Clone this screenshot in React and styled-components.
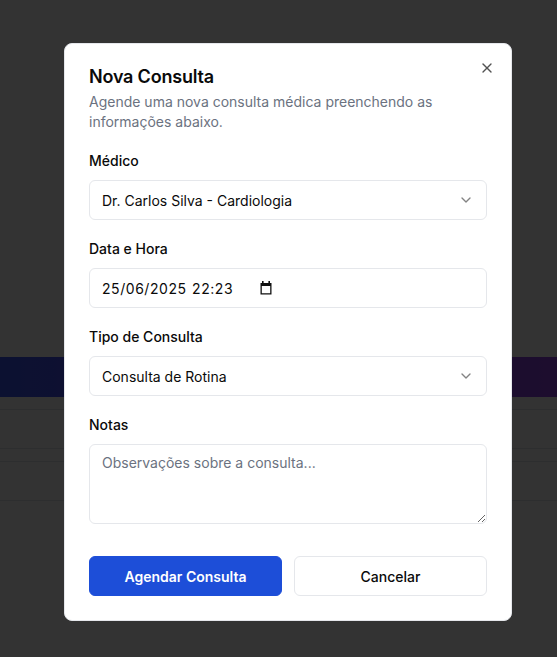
import React from 'react';
import styled, { createGlobalStyle } from 'styled-components';

const GlobalStyle = createGlobalStyle`
  * { box-sizing: border-box; }
  html, body { margin: 0; padding: 0; }
  body {
    font-family: Inter, "Noto Sans", "Liberation Sans", sans-serif;
    color: #0a0a0a;
    background: #ffffff;
  }
`;

// pagina de fundo (fica atras do overlay)
const Page = styled.div`
  min-height: 100vh;
  background: #ffffff;
`;

const Hero = styled.div`
  height: 357px;
`;

const TableHead = styled.div`
  height: 40px;
  background: linear-gradient(90deg, #3c55f5, #9141e6);
`;

const TableRows = styled.div`
  display: flex;
  flex-direction: column;
  gap: 12px;
  padding-top: 12px;
`;

const TableRow = styled.div`
  height: 40px;
  border-top: 1px solid #e2e4e8;
  border-bottom: 1px solid #e2e4e8;
`;

const Overlay = styled.div`
  position: fixed;
  inset: 0;
  background: rgba(0, 0, 0, 0.8);
`;

// modal
const Dialog = styled.div`
  position: fixed;
  top: 43px;
  left: 64px;
  width: 448px;
  padding: 24px;
  background: #ffffff;
  border: 1px solid #e5e7eb;
  border-radius: 8px;
  display: flex;
  flex-direction: column;
`;

const CloseButton = styled.button`
  position: absolute;
  top: 16px;
  right: 16px;
  width: 16px;
  height: 16px;
  padding: 0;
  border: none;
  background: none;
  color: #0a0a0a;
  opacity: 0.7;
  display: flex;
  cursor: pointer;
`;

const Title = styled.h2`
  margin: 0;
  font-size: 18px;
  line-height: 18px;
  font-weight: 600;
  letter-spacing: -0.2px;
`;

const Description = styled.p`
  margin: 6px 0 0;
  font-size: 14px;
  line-height: 20px;
  color: #6b7280;
`;

const Form = styled.form`
  display: flex;
  flex-direction: column;
  gap: 22px;
  margin-top: 22px;
`;

const Field = styled.div`
  display: flex;
  flex-direction: column;
  gap: 12px;
`;

const Label = styled.label`
  font-size: 14px;
  line-height: 14px;
  font-weight: 500;
  color: #0a0a0a;
`;

const Box = styled.div`
  height: 40px;
  padding: 0 12px;
  display: flex;
  align-items: center;
  justify-content: ${(p) => (p.$start ? 'flex-start' : 'space-between')};
  border: 1px solid #e5e7eb;
  border-radius: 6px;
  background: #ffffff;
  font-size: 14px;
  color: #0a0a0a;
`;

const DateText = styled.span`
  letter-spacing: 0.55px;
  word-spacing: 1px;
`;

const Chevron = styled.svg`
  width: 16px;
  height: 16px;
  opacity: 0.5;
`;

const CalendarIcon = styled.svg`
  width: 12px;
  height: 14px;
  margin-left: 27px;
`;

const NotesArea = styled.textarea`
  height: 80px;
  padding: 8px 12px;
  border: 1px solid #e5e7eb;
  border-radius: 6px;
  font-family: inherit;
  font-size: 14px;
  line-height: 20px;
  color: #0a0a0a;
  outline: none;
  &::placeholder {
    color: #6b7280;
  }
`;

const Footer = styled.div`
  display: grid;
  grid-template-columns: 1fr 1fr;
  gap: 12px;
  margin-top: 32px;
`;

const Button = styled.button`
  height: 40px;
  border-radius: 6px;
  font-family: inherit;
  font-size: 14px;
  font-weight: ${(p) => (p.$primary ? 600 : 500)};
  color: ${(p) => (p.$primary ? '#ffffff' : '#0a0a0a')};
  background: ${(p) => (p.$primary ? '#1d4ed8' : '#ffffff')};
  border: 1px solid ${(p) => (p.$primary ? '#1d4ed8' : '#e5e7eb')};
  cursor: pointer;
`;

const ChevronDown = () => (
  <Chevron viewBox="0 0 24 24" fill="none" stroke="currentColor" strokeWidth="2" strokeLinecap="round" strokeLinejoin="round">
    <path d="m6 9 6 6 6-6" />
  </Chevron>
);

export default function App() {
  return (
    <>
      <GlobalStyle />
      <Page>
        <Hero />
        <TableHead />
        <TableRows>
          <TableRow />
          <TableRow />
        </TableRows>
      </Page>
      <Overlay />
      <Dialog role="dialog">
        <CloseButton type="button" aria-label="Fechar">
          <svg width="16" height="16" viewBox="0 0 24 24" fill="none" stroke="currentColor" strokeWidth="2" strokeLinecap="round" strokeLinejoin="round">
            <path d="M18 6 6 18" />
            <path d="m6 6 12 12" />
          </svg>
        </CloseButton>
        <Title>Nova Consulta</Title>
        <Description>Agende uma nova consulta médica preenchendo as informações abaixo.</Description>
        <Form onSubmit={(e) => e.preventDefault()}>
          <Field>
            <Label>Médico</Label>
            <Box>
              <span>Dr. Carlos Silva - Cardiologia</span>
              <ChevronDown />
            </Box>
          </Field>
          <Field>
            <Label>Data e Hora</Label>
            <Box $start>
              <DateText>25/06/2025 22:23</DateText>
              <CalendarIcon viewBox="0 0 12 14" fill="#111111">
                <rect x="2" y="0" width="1.6" height="3" />
                <rect x="8.4" y="0" width="1.6" height="3" />
                <path d="M0.5 2h11v11.5h-11z M1.8 5v7.2h8.4V5z" fillRule="evenodd" />
              </CalendarIcon>
            </Box>
          </Field>
          <Field>
            <Label>Tipo de Consulta</Label>
            <Box>
              <span>Consulta de Rotina</span>
              <ChevronDown />
            </Box>
          </Field>
          <Field>
            <Label>Notas</Label>
            <NotesArea placeholder="Observações sobre a consulta..." />
          </Field>
        </Form>
        <Footer>
          <Button type="button" $primary>Agendar Consulta</Button>
          <Button type="button">Cancelar</Button>
        </Footer>
      </Dialog>
    </>
  );
}
